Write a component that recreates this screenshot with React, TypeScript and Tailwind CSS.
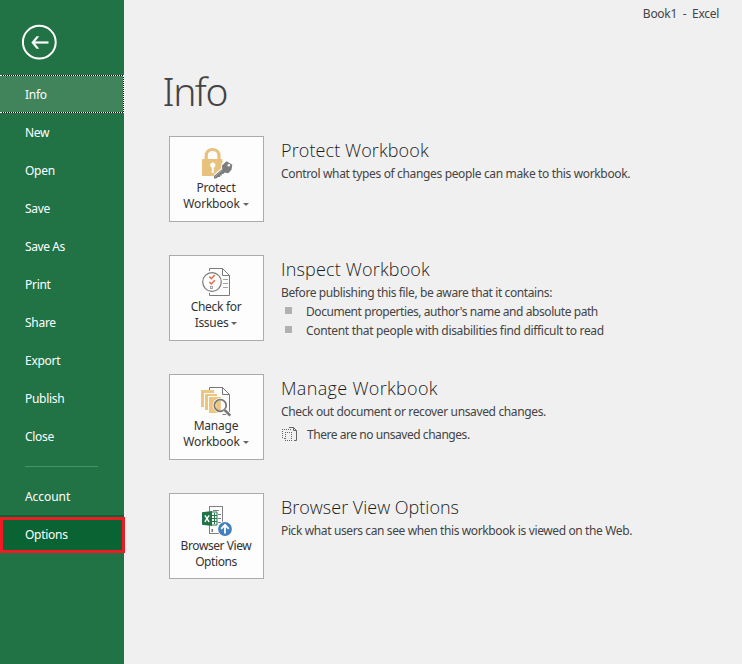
import type { ReactNode } from "react";

const sans = "font-['Noto_Sans','Open_Sans',sans-serif]";

function BackIcon() {
  return (
    <svg width="36" height="36" viewBox="0 0 36 36" fill="none" stroke="#fff">
      <circle cx="18.3" cy="18.2" r="16.4" strokeWidth="2" />
      <path d="M27.5 18.5H12" strokeWidth="2.2" />
      <path d="M17.8 12.5h-2.3L10.6 18.5l4.9 6h2.3l-4.6-6z" fill="#fff" strokeWidth=".4" />
    </svg>
  );
}

function LockIcon() {
  return (
    <svg width="32" height="32" viewBox="0 0 32 32">
      <path d="M5.2 12.5V8.8C5.2 5 7.8 2.5 11.5 2.5s6.5 2.5 6.5 6.3v3.7" fill="none" stroke="#e8c17d" strokeWidth="3.2" />
      <rect x="1" y="12" width="20.5" height="17" rx="1" fill="#e8c17d" />
      <circle cx="11.8" cy="18" r="2.6" fill="#fff" />
      <rect x="10.8" y="18" width="2" height="8" fill="#fff" />
      <path d="M20.5 16.5l4.5-3 7 5-.5 6-5.5 2-8.5 6-5-.5.5-4.5 7-6z" fill="#fdfdfd" />
      <path d="M21 18.5l4.5-4.3 5.8 3.5-.8 5-3.2 3.5-3.8-.8-1.2 1.5h-1.5v1.7h-1.7v1.5h-1.8L15 31.5h-2v-2.5l8.2-7z" fill="#7d7d7d" />
      <circle cx="27.8" cy="18.2" r="1.3" fill="#fff" />
      <path d="M14 30l7.5-7" stroke="#b5b5b5" strokeWidth=".7" />
    </svg>
  );
}

function CheckIcon() {
  return (
    <svg width="32" height="32" viewBox="0 0 32 32" fill="none" stroke="#7b7b7b">
      <path d="M8.5 5V2.5h13l7 7v20h-20V27M21.5 2.5v7h7" />
      <path d="M22 13.5h5M22 17.5h5M22 21.5h5" stroke="#a3a3a3" />
      <circle cx="11" cy="16" r="9.3" fill="#fdfdfd" strokeWidth="1.2" />
      <path d="M8.3 10.6l2 2.1 3.5-3.7M8.3 15.9l2 2.1 3.5-3.7" stroke="#e56b4c" strokeWidth="1.5" />
      <rect x="9.5" y="20.5" width="2" height="2" stroke="#999" strokeWidth=".9" />
    </svg>
  );
}

function ManageIcon() {
  return (
    <svg width="32" height="32" viewBox="0 0 32 32" fill="none">
      <path d="M8.5 5V2.5h13l7 7v20h-7M21.5 2.5v7h7" stroke="#777" />
      <path d="M0 5h13v17H0z" fill="#ecc67f" />
      <path d="M3 8h12v16H3z" fill="#fdfdfd" />
      <path d="M4 9h12v16H4z" fill="#ecc67f" />
      <path d="M7 11h12v15H7z" fill="#fdfdfd" />
      <path d="M8 12h12v16H8z" fill="#ecc67f" />
      <circle cx="19.3" cy="20.5" r="7.6" fill="#fdfdfd" />
      <path d="M15.2 17.5L17 15.7h2.8v9.8H17l-1.8-2z" fill="#ecc67f" />
      <circle cx="19.3" cy="20.5" r="5.9" stroke="#777" strokeWidth="1.8" />
      <path d="M23.5 24.8l5.7 5.7" stroke="#fdfdfd" strokeWidth="4.5" />
      <path d="M23.5 24.8l5.8 5.8" stroke="#777" strokeWidth="2.5" />
    </svg>
  );
}

function BrowserIcon() {
  return (
    <svg width="32" height="32" viewBox="0 0 32 32" fill="none">
      <rect x="8.5" y="2.5" width="13" height="27" stroke="#808080" />
      <path d="M12 6.5h6M17 10.5h3M17 14.5h3M17 18.5h3" stroke="#808080" />
      <path d="M10.5 25h1.5v3h-1.5z" fill="#777" />
      <path d="M10 8h6v13h-6z" fill="#fdfdfd" stroke="#27794c" strokeWidth="1" />
      <path d="M11 11.5h5M11 14.5h5M11 17.5h5M13.5 9v11" stroke="#27794c" />
      <path d="M1 8.2L11 7v15L1 20.8z" fill="#217346" />
      <path d="M3.9 11.3l4.2 6.5M8.1 11.3l-4.2 6.5" stroke="#fff" strokeWidth="1.5" />
      <circle cx="24" cy="25" r="7.8" fill="#fdfdfd" />
      <circle cx="24" cy="25" r="6.9" fill="#4380bd" />
      <path d="M24 29.5v-8M20.2 24.8l3.8-3.9 3.8 3.9" stroke="#fff" strokeWidth="1.8" />
    </svg>
  );
}

function UnsavedIcon() {
  return (
    <svg width="16" height="16" viewBox="0 0 16 16" fill="none" stroke="#666">
      <path d="M7 .5h4.5l3 3v10H12M11.5.5v3h3" />
      <path d="M0 2.5h9M.5 4v8M3 5.5h7M3.5 7v7M9.5 7v7M5 13.5h4M2 11.5h1" strokeDasharray="1 1" />
    </svg>
  );
}

function NavItem({ label, tracking = "tracking-[-0.28px]" }: { label: string; tracking?: string }) {
  return <div className={`flex h-[38px] items-center pt-0.5 pl-[25px] ${tracking}`}>{label}</div>;
}

interface TileProps {
  icon: ReactNode;
  first: string;
  second: string;
  menu?: boolean;
  className?: string;
}

function Tile({ icon, first, second, menu, className = "tracking-[-0.2px]" }: TileProps) {
  return (
    <div className={`flex h-[86px] w-[95px] shrink-0 flex-col items-center border border-[#ababab] bg-[#fdfdfd] pt-2.5 leading-4 text-[#333] ${className}`}>
      <div className="h-[33px]">{icon}</div>
      <div className="pr-px whitespace-nowrap">{first}</div>
      <div className="flex items-center pr-px whitespace-nowrap">
        {second}
        {menu && <span className="ml-[3px] border-x-[3px] border-t-[3px] border-x-transparent border-t-[#666]" />}
      </div>
    </div>
  );
}

interface SectionProps {
  tile: ReactNode;
  title: string;
  titleTracking?: string;
  text: string;
  textTracking: string;
  children?: ReactNode;
}

function Section({ tile, title, titleTracking, text, textTracking, children }: SectionProps) {
  return (
    <section className="flex h-[119px] gap-[17px]">
      {tile}
      <div className="pt-0.5 whitespace-nowrap">
        <h2 className={`font-['Open_Sans','Noto_Sans',sans-serif] text-lg leading-6 font-light text-[#1c1c1c] ${titleTracking ?? ""}`}>{title}</h2>
        <p className={`mt-[3px] leading-[18px] ${textTracking}`}>{text}</p>
        {children}
      </div>
    </section>
  );
}

export default function App() {
  return (
    <div className={`flex h-[664px] w-[742px] overflow-hidden bg-[#f0f0f0] text-xs text-[#444] ${sans}`}>
      <nav className="w-[124px] shrink-0 bg-[#217346] text-white">
        <div className="h-[75px] pt-6 pl-[21px]"><BackIcon /></div>
        <div className="h-[38px] border border-l-0 border-dotted border-white bg-black">
          <div className="flex h-9 items-center bg-[#41845c] pt-0.5 pl-[25px] tracking-[-0.28px]">Info</div>
        </div>
        <NavItem label="New" />
        <NavItem label="Open" />
        <NavItem label="Save" />
        <NavItem label="Save As" tracking="tracking-[-0.42px]" />
        <NavItem label="Print" />
        <NavItem label="Share" />
        <NavItem label="Export" />
        <NavItem label="Publish" />
        <NavItem label="Close" />
        <div className="mt-[11px] mb-[10px] ml-[25px] h-px w-[73px] bg-[#439467]" />
        <NavItem label="Account" tracking="tracking-[-0.05px]" />
        <div className="h-[38px] w-[125px] bg-[linear-gradient(to_right,#0a6332_124px,#f0f0f0_124px)] pt-0.5">
          <div className="flex h-9 items-center border-3 border-[#ed1c24] bg-[#0a6332] pb-px pl-[22px] tracking-[-0.28px]">Options</div>
        </div>
      </nav>
      <main className="flex-1">
        <div className="flex h-[28px] items-center justify-end pr-[23px] tracking-[-0.28px] whitespace-pre">Book1  -  Excel</div>
        <h1 className="mt-[34px] h-[74px] pl-[38.5px] text-[39px] leading-[58px] font-light tracking-[-1.5px]">Info</h1>
        <div className="pl-[45px]">
          <Section
            tile={<Tile icon={<LockIcon />} first="Protect" second="Workbook" menu />}
            title="Protect Workbook"
            titleTracking="tracking-[0.1px]"
            text="Control what types of changes people can make to this workbook."
            textTracking="tracking-[-0.35px]"
          />
          <Section
            tile={<Tile icon={<CheckIcon />} first="Check for" second="Issues" menu className="tracking-[-0.3px]" />}
            title="Inspect Workbook"
            titleTracking="tracking-[0.17px]"
            text="Before publishing this file, be aware that it contains:"
            textTracking="tracking-[-0.39px]"
          >
            <ul className="leading-[19px]">
              <li className="flex gap-3.5 pl-1 tracking-[-0.43px]"><span className="mt-[5px] h-[7px] w-[7px] bg-[#b1b1b1]" />Document properties, author's name and absolute path</li>
              <li className="flex gap-3.5 pl-1 tracking-[-0.32px]"><span className="mt-[5px] h-[7px] w-[7px] bg-[#b1b1b1]" />Content that people with disabilities find difficult to read</li>
            </ul>
          </Section>
          <Section
            tile={<Tile icon={<ManageIcon />} first="Manage" second="Workbook" menu />}
            title="Manage Workbook"
            titleTracking="tracking-[0.32px]"
            text="Check out document or recover unsaved changes."
            textTracking="tracking-[-0.36px]"
          >
            <div className="mt-[5px] flex items-center gap-[9px] pl-px leading-[18px] tracking-[-0.45px]"><UnsavedIcon />There are no unsaved changes.</div>
          </Section>
          <Section
            tile={<Tile icon={<BrowserIcon />} first="Browser View" second="Options" className="tracking-[-0.42px] [&>div+div]:translate-y-px" />}
            title="Browser View Options"
            text="Pick what users can see when this workbook is viewed on the Web."
            textTracking="tracking-[-0.38px]"
          />
        </div>
      </main>
    </div>
  );
}
